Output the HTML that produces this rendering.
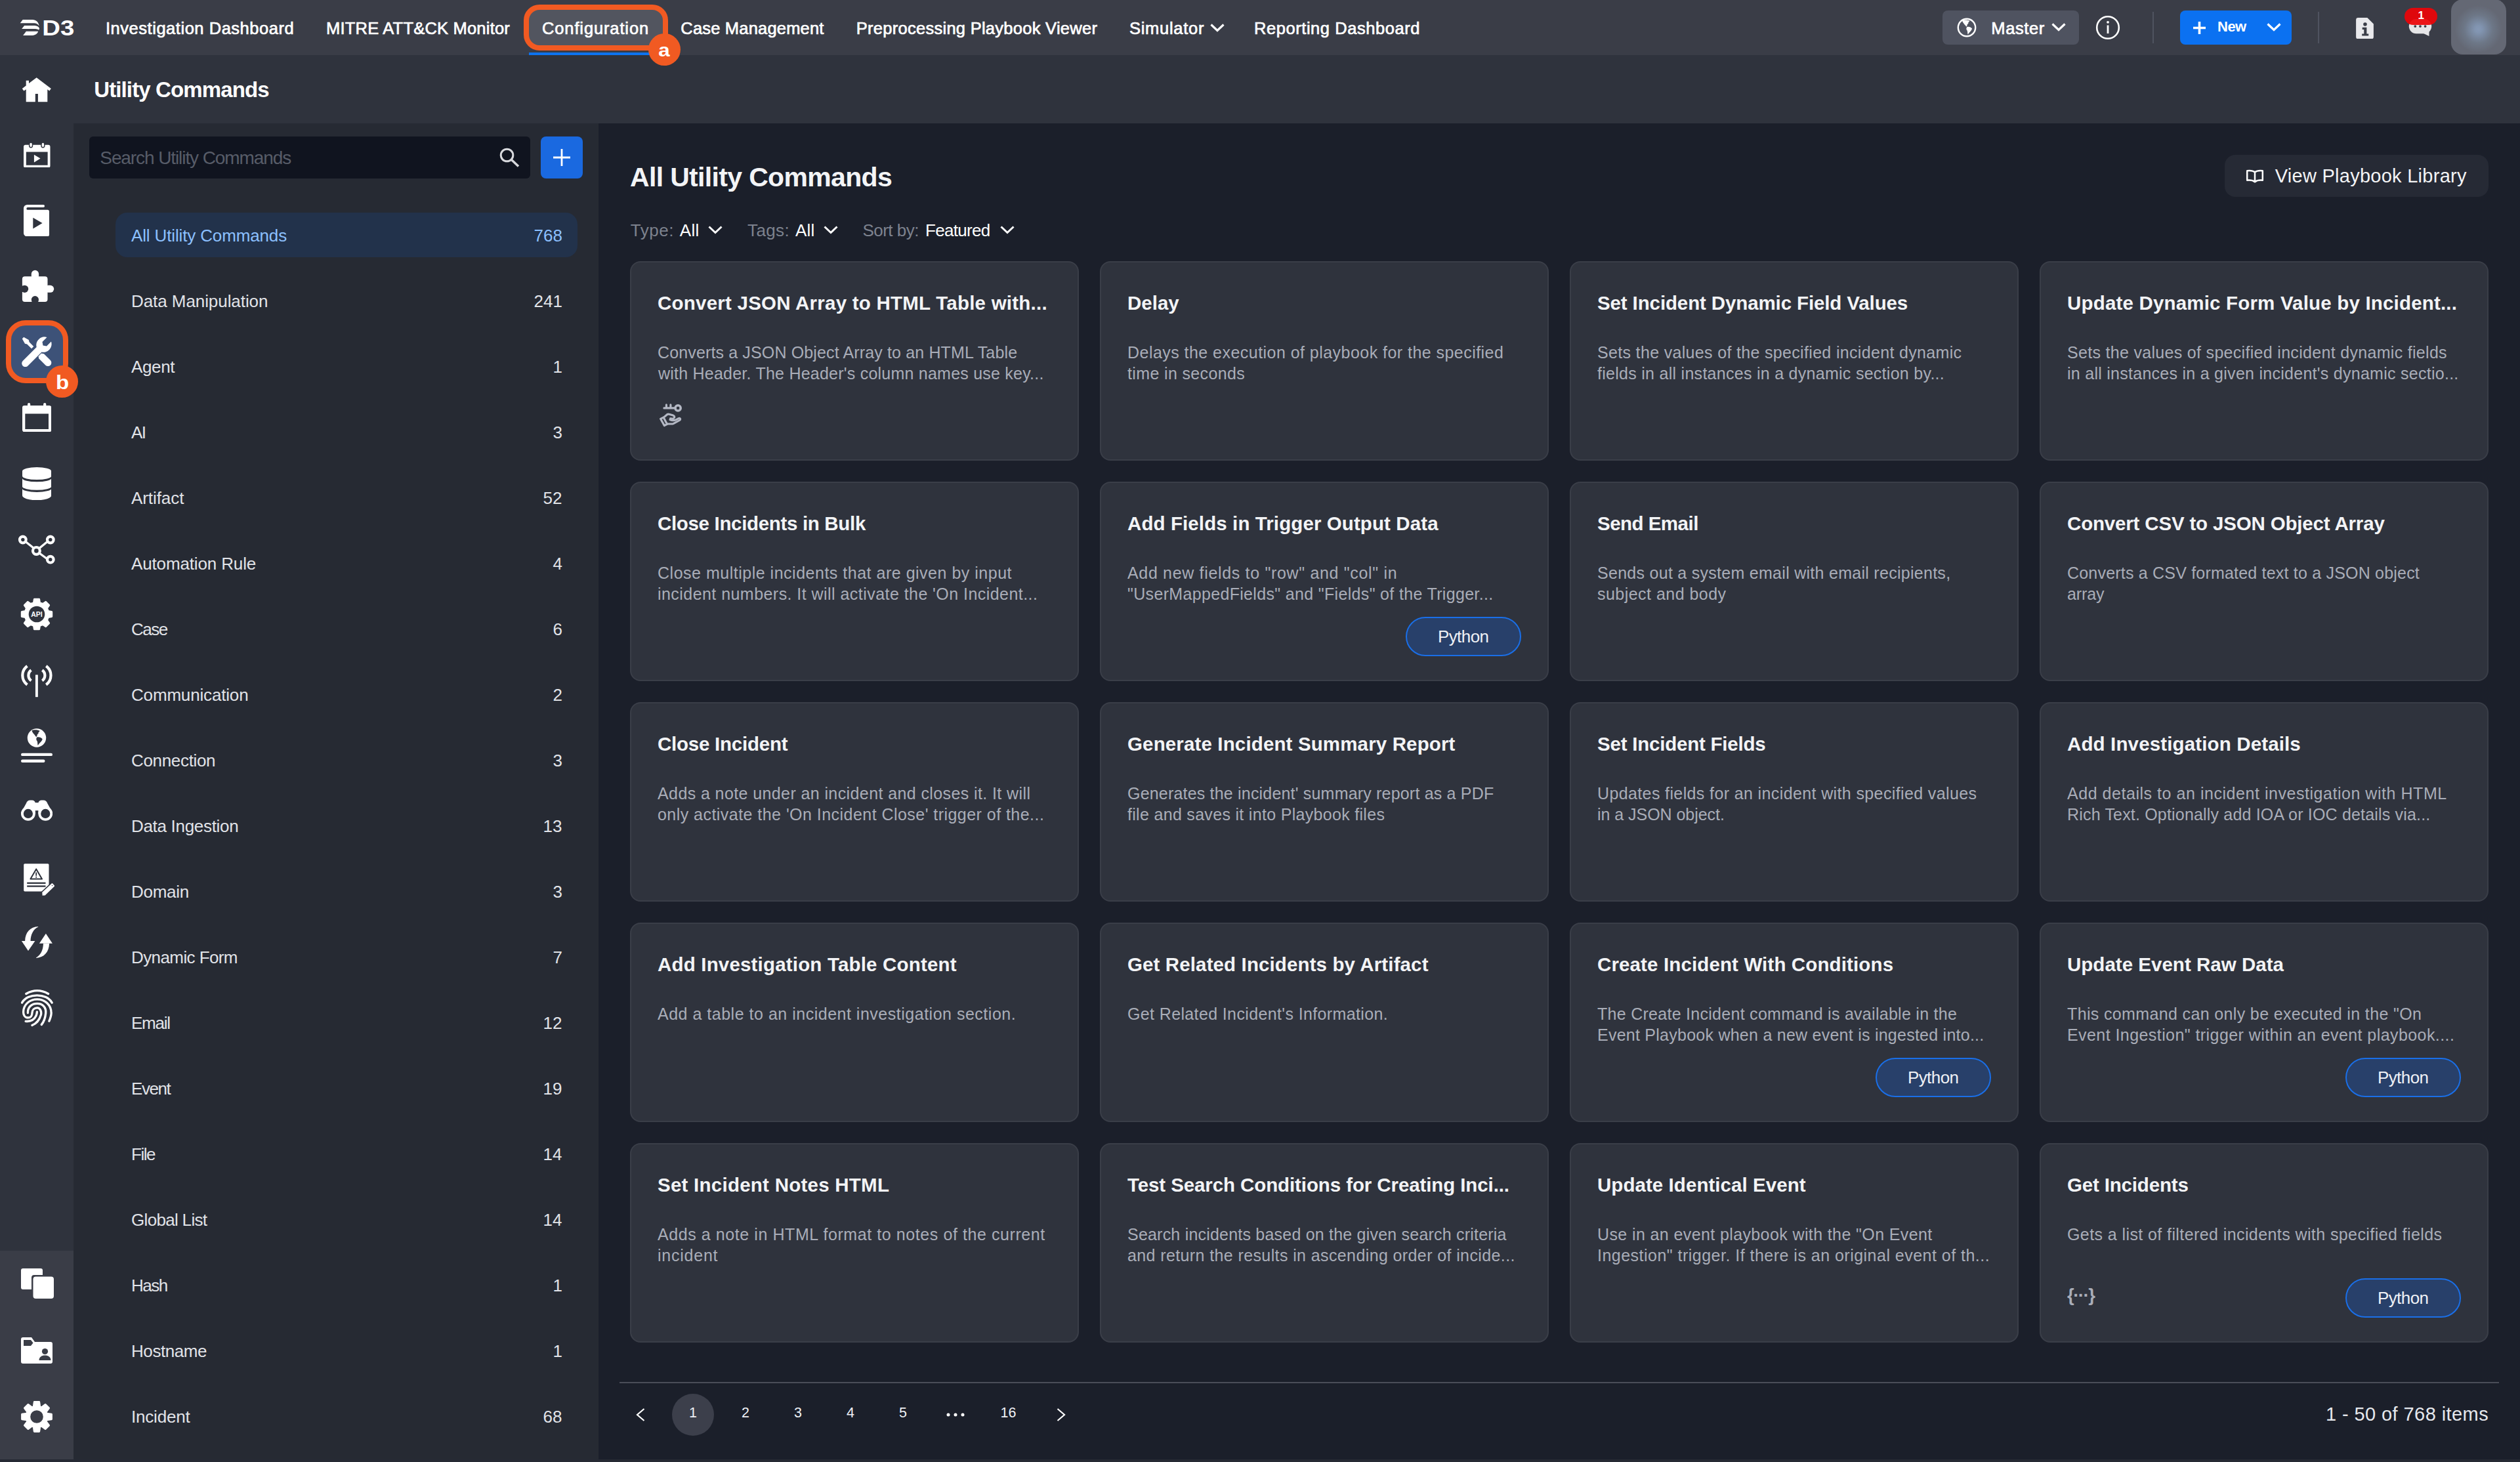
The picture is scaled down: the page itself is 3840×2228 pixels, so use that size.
<!DOCTYPE html>
<html lang="en"><head><meta charset="utf-8"><title>Utility Commands</title>
<style>
*{box-sizing:border-box;margin:0;padding:0}
html,body{width:3840px;height:2228px;overflow:hidden;background:#1b1f2a}
body{position:relative;font-family:"Liberation Sans",Arial,sans-serif;color:#fff}
body div,body span,body a,body svg,body nav,body header,body aside,body main,body section,body h1,body h2,body h3,body p,body ul,body li,body button{position:absolute;white-space:nowrap}
h1,h2,h3{font-weight:700}
ul{list-style:none}
a{text-decoration:none;color:inherit}
.topbar{left:0;top:0;width:3840px;height:84px;background:#3a3d47}
.sub{left:0;top:84px;width:3840px;height:104px;background:#2f333d}
.rail{left:0;top:84px;width:112px;height:2140px;background:#2f333d;z-index:3}
.railbot{left:0;top:1822px;width:112px;height:318px;background:#3a3d47}
.panel{left:112px;top:188px;width:800px;height:2036px;background:#262a33}
.main{left:912px;top:188px;width:2928px;height:2036px;background:#1b1f2a}
.foot{left:0;top:2224px;width:3840px;height:4px;background:#262a34}
.nav a{-webkit-text-stroke:0.7px #fff}
.card{width:684px;height:304px;background:#2f333d;border:2px solid #3a3e48;border-radius:16px}
.badge{width:176px;height:60px;border:2px solid #1a6fe8;border-radius:30px;background:#28406a}
.sel{left:64px;top:136px;width:704px;height:68px;border-radius:18px;background:#22324b}
</style></head>
<body>
<header class="topbar">
<svg style="left:24px;top:20px" width="100" height="44" viewBox="0 0 100 44">
<g fill="#fff"><path d="M10.700 10.100H25.400C31 10.300 34.500 13.500 35.700 19.400 33.500 16.700 31 15.400 28 15.300H6.700z"/><path d="M13.100 19H29C32.500 19.300 35 20.800 36.100 23.300L35.200 25.700C33.800 24.600 32 24.100 30 24H9.100z"/><path d="M15.900 27.800H34.200C33 31.500 30 33.700 25.400 33.900H11.100z"/></g>
<text x="40.300" y="33.900" font-family="Liberation Sans,sans-serif" font-weight="700" font-size="33.200" fill="#fff" textLength="49" lengthAdjust="spacingAndGlyphs">D3</text></svg>
<nav class="nav">
<div style="left:798px;top:7px;width:220px;height:70px;border:8px solid #f15a22;border-radius:24px;background:#52555f"></div>
<div style="left:806px;top:80px;width:204px;height:4px;background:#0d73f0"></div>
<a style="top:26.5px;font-size:25.5px;line-height:33px;color:#fff;letter-spacing:0.53px;left:161.0px;">Investigation Dashboard</a>
<a style="top:26.5px;font-size:25.5px;line-height:33px;color:#fff;letter-spacing:0.21px;left:497.0px;">MITRE ATT&amp;CK Monitor</a>
<a style="top:26.5px;font-size:25.5px;line-height:33px;color:#fff;letter-spacing:0.87px;left:826.0px;">Configuration</a>
<a style="top:26.5px;font-size:25.5px;line-height:33px;color:#fff;letter-spacing:0.19px;left:1037.3px;">Case Management</a>
<a style="top:26.5px;font-size:25.5px;line-height:33px;color:#fff;letter-spacing:0.27px;left:1304.8px;">Preprocessing Playbook Viewer</a>
<a style="top:26.5px;font-size:25.5px;line-height:33px;color:#fff;letter-spacing:0.71px;left:1721.0px;">Simulator</a>
<a style="top:26.5px;font-size:25.5px;line-height:33px;color:#fff;letter-spacing:0.56px;left:1911.0px;">Reporting Dashboard</a>
<svg style="left:1843px;top:34px" width="24" height="16" viewBox="0 0 24 16"><path d="M2.500 3.500 12 12.500 21.500 3.500" fill="none" stroke="#fff" stroke-width="3.200"/></svg>
</nav>
<div style="left:988px;top:51px;width:49px;height:49px;border-radius:50%;background:#f15a22;z-index:5"></div>
<div style="top:58.4px;font-size:28.5px;line-height:37px;color:#fff;font-weight:700;left:1004.0px;z-index:6;transform:scaleX(1.1);">a</div>
<div style="left:2960px;top:16px;width:208px;height:52px;border-radius:8px;background:#4f5360"></div>
<svg style="left:2982.400px;top:26.900px" width="30" height="30" viewBox="0 0 30 30"><circle cx="15" cy="15" r="13.200" fill="none" stroke="#fff" stroke-width="2.400"/>
<g fill="#fff" transform="translate(15 15) scale(0.93) translate(-25 -14.500)"><path d="M17.500 3.200C20 1.800 27 1.800 29.800 3.900 28 5 27 6.500 27.500 8 26 8.500 25.300 10 25.500 11.500 25 12.500 24.300 13 24 12.900 22.500 10 19 8 17.500 3.200z"/><path d="M25.300 13.600C28 12.500 32 14 33.700 16.200 33 19 31 21 29.800 22 28.500 23.500 27.500 25 26.600 25.900 26 22 26.500 20 24.600 18.100 24 16 24.500 14.500 25.300 13.600z"/></g></svg>
<div style="top:26.5px;font-size:25.5px;line-height:33px;color:#fff;letter-spacing:0.60px;left:3034.3px;-webkit-text-stroke:0.7px #fff;">Master</div>
<svg style="left:3125px;top:33px" width="24" height="16" viewBox="0 0 24 16"><path d="M2.500 3.500 12 12.500 21.500 3.500" fill="none" stroke="#fff" stroke-width="3.200"/></svg>
<svg style="left:3193px;top:23px" width="38" height="38" viewBox="0 0 38 38"><circle cx="19" cy="19" r="16.800" fill="none" stroke="#fff" stroke-width="2.600"/><rect x="17.600" y="15.500" width="2.800" height="12.500" fill="#fff"/><circle cx="19" cy="10.800" r="1.900" fill="#fff"/></svg>
<div style="left:3280px;top:18px;width:2px;height:48px;background:#4f5360"></div>
<button style="left:3322px;top:16px;width:170px;height:52px;border:0;border-radius:8px;background:#0b71f1"></button>
<svg style="left:3341px;top:32px" width="21" height="21" viewBox="0 0 21 21"><path d="M10.500 1v19M1 10.500h19" stroke="#fff" stroke-width="3.600" fill="none"/></svg>
<div style="top:25.5px;font-size:22px;line-height:29px;color:#fff;font-weight:700;letter-spacing:-0.50px;left:3379.0px;">New</div>
<svg style="left:3453px;top:33px" width="24" height="16" viewBox="0 0 24 16"><path d="M2.500 3.500 12 12.500 21.500 3.500" fill="none" stroke="#fff" stroke-width="3.200"/></svg>
<div style="left:3532px;top:18px;width:2px;height:48px;background:#4f5360"></div>
<svg style="left:3589.500px;top:26.700px" width="27" height="32.500" viewBox="0 0 28 34"><path d="M3.500 0H18l10 10v20.500a3.500 3.500 0 0 1-3.500 3.500h-21A3.500 3.500 0 0 1 0 30.500v-27A3.500 3.500 0 0 1 3.500 0z" fill="#e9e9ec"/>
<circle cx="14.500" cy="10.500" r="2.900" fill="#3a3d47"/><path d="M10 15.500h7v10h3v3.200H9.500v-3.200h3.200v-6.800H10z" fill="#3a3d47"/></svg>
<svg style="left:3670px;top:28px" width="37" height="29" viewBox="0 0 37 29"><rect x="0.800" y="1" width="34.400" height="22.200" rx="11" fill="#e6e6e8"/><path d="M22 22.500 31.400 27 31.600 18z" fill="#e6e6e8"/>
<circle cx="10.300" cy="12.100" r="1.900" fill="#3a3d47"/><circle cx="18" cy="12.100" r="1.900" fill="#3a3d47"/><circle cx="25.600" cy="12.100" r="1.900" fill="#3a3d47"/></svg>
<div style="left:3664px;top:12px;width:50px;height:26px;border-radius:13px;background:rgba(236,4,8,0.93)"></div>
<div style="top:13.1px;font-size:17px;line-height:22px;color:#fff;font-weight:700;left:3684.5px;">1</div>
<div style="left:3735px;top:-1px;width:84px;height:84px;border-radius:18px;background:radial-gradient(circle 36px at 49.500% 54%,#8598b5 0%,#8194b0 15%,#6d7787 60%,#646874 100%)"></div>
</header>
<section class="sub">
<h1 style="top:31.3px;font-size:33px;line-height:43px;color:#fff;font-weight:700;letter-spacing:-0.87px;left:143.2px;">Utility Commands</h1>
</section>
<aside class="rail">
<div class="railbot"></div>
<div style="left:9px;top:404px;width:95px;height:96px;border:8px solid #f15a22;border-radius:30px;background:#3d5278"></div>
<svg style="left:33.0px;top:33.5px;" width="46" height="38" viewBox="0 0 46 38"><path fill="#fff" d="M22.700 0.300 44.800 17 42.300 20.500 39.300 18.200V37.300H24.900V25H20.800V37.300H6.700V18.200L3.300 20.500 0.800 17 6.700 12.400V4.700H11V9.100z"/></svg>
<svg style="left:36.0px;top:132.9px;" width="40.5" height="38.6" viewBox="0 0 42 40"><path fill="#fff" fill-rule="evenodd" d="M3 4h36a3 3 0 0 1 3 3v30a3 3 0 0 1-3 3H3a3 3 0 0 1-3-3V7a3 3 0 0 1 3-3zM4 15v21h34V15zM16.500 19.500v12l10-6z"/><rect x="9" y="0" width="5" height="8" rx="2.500" fill="#fff" stroke="#2f333d" stroke-width="1.500"/><rect x="28" y="0" width="5" height="8" rx="2.500" fill="#fff" stroke="#2f333d" stroke-width="1.500"/></svg>
<svg style="left:35.7px;top:227.8px;" width="39" height="48.3" viewBox="0 0 39 48.300"><path fill="#fff" fill-rule="evenodd" d="M5.500 0H30a2.050 2.050 0 0 1 0 4.100H6.200a1.850 1.850 0 0 0 0 3.700H36.500a2.500 2.500 0 0 1 2.500 2.500V45.800a2.500 2.500 0 0 1-2.500 2.500H5a5 5 0 0 1-5-5V5.500A5.500 5.500 0 0 1 5.500 0zM14.300 19.800V36.400L28.600 28.100z"/></svg>
<svg style="left:33.0px;top:327.0px;" width="50" height="50" viewBox="0 0 50 50"><g fill="#fff"><rect x="0.900" y="10.200" width="38.600" height="38.900" rx="4"/><rect x="14.800" y="0.800" width="11.300" height="14" rx="5.650"/><rect x="35" y="23.800" width="14.200" height="11" rx="5.500"/></g><g fill="#2f333d"><circle cx="4.600" cy="29.300" r="5.600"/><rect x="0" y="24.600" width="4.600" height="9.400"/><circle cx="20.400" cy="45.700" r="5.600"/><rect x="15.700" y="45.700" width="9.400" height="4.300"/></g></svg>
<svg style="left:33.0px;top:429.0px;" width="46" height="46" viewBox="0 0 46 46"><g fill="#fff"><path d="M0.800 3.200 3.200 0.800 10.800 5 11.600 8.200 18.300 14.900 15 18.200 8.200 11.600 5 10.800z"/><path d="M25.500 30 30 25.500 34 26.200 43.800 36a5 5 0 0 1-7.500 7.500L26.300 33.500z"/><path d="M38.500 1 31.500 8l1 5.500 5.500 1 7-7A12.500 12.500 0 0 1 30.500 23.500L9.500 44.500a5.300 5.300 0 0 1-7.800-7.500L22.700 16A12.500 12.500 0 0 1 38.500 1z"/></g></svg>
<svg style="left:33.9px;top:529.7px;" width="44.3" height="44.3" viewBox="0 0 44.300 44.300"><path fill="#fff" fill-rule="evenodd" d="M3.200 4h37.900a3.200 3.200 0 0 1 3.200 3.200v33.900a3.200 3.200 0 0 1-3.200 3.200H3.200A3.200 3.200 0 0 1 0 41.100V7.200A3.200 3.200 0 0 1 3.200 4zM4.300 16.600V40H40V16.600z"/><rect x="8" y="0" width="4.200" height="8" rx="2.100" fill="#fff"/><rect x="32.100" y="0" width="4.200" height="8" rx="2.100" fill="#fff"/></svg>
<svg style="left:33.9px;top:627.9px;" width="44.2" height="50.3" viewBox="0 0 44.200 50.300"><g fill="#fff"><path d="M0 6.100A22.100 6.100 0 0 1 44.200 6.100V13.500A22.100 5.600 0 0 1 0 13.500z"/><path d="M0 17.100A22.100 5.200 0 0 0 44.200 17.100V29.500A22.100 5.200 0 0 1 0 29.500z"/><path d="M0 32.700A22.100 5.200 0 0 0 44.200 32.700V43.100A22.100 7.200 0 0 1 0 43.100z"/></g></svg>
<svg style="left:27.0px;top:731.0px;" width="58" height="46" viewBox="0 0 58 46"><g fill="none" stroke="#fff"><path stroke-width="3.400" d="M12 10.500 24 20M33.500 20 44.500 11M33 28l11.500 8.500"/><g stroke-width="4.200"><circle cx="7.800" cy="7.500" r="4.800"/><circle cx="49.800" cy="7.500" r="4.800"/><circle cx="28.400" cy="24.400" r="5.400"/><circle cx="49.800" cy="37.700" r="4.800"/></g></g></svg>
<svg style="left:31.0px;top:826.5px;" width="50" height="50" viewBox="0 0 50 50"><path fill="#fff" stroke="#fff" stroke-width="3" stroke-linejoin="round" d="M20.5 7.6 L21.4 2.3 L28.6 2.3 L29.5 7.6 L34.2 9.5 L38.6 6.4 L43.6 11.4 L40.5 15.8 L42.4 20.5 L47.7 21.4 L47.7 28.6 L42.4 29.5 L40.5 34.2 L43.6 38.6 L38.6 43.6 L34.2 40.5 L29.5 42.4 L28.6 47.7 L21.4 47.7 L20.5 42.4 L15.8 40.5 L11.4 43.6 L6.4 38.6 L9.5 34.2 L7.6 29.5 L2.3 28.6 L2.3 21.4 L7.6 20.5 L9.5 15.8 L6.4 11.4 L11.4 6.4 L15.8 9.5Z"/><circle cx="25" cy="25" r="12.300" fill="#2f333d"/><text x="25" y="28.900" text-anchor="middle" font-family="Liberation Sans,sans-serif" font-weight="700" font-size="10.500" fill="#fff">API</text></svg>
<svg style="left:31.0px;top:928.5px;" width="50" height="50" viewBox="0 0 50 50"><g fill="none" stroke="#fff" stroke-width="4.200"><path d="M10.500 2A17.700 17.700 0 0 0 10.500 30.500M39.300 2A17.700 17.700 0 0 1 39.300 30.500M16.500 8.300A9.950 9.950 0 0 0 16.500 24.400M33.300 8.300A9.950 9.950 0 0 1 33.300 24.400"/><path stroke-width="3.900" d="M24.900 15.400V49.200"/></g></svg>
<svg style="left:31.0px;top:1026.0px;" width="50" height="52" viewBox="0 0 50 52"><circle cx="25" cy="14.500" r="14.200" fill="#fff"/><g fill="#2f333d"><path d="M17.500 3.200C20 1.800 27 1.800 29.800 3.900 28 5 27 6.500 27.500 8 26 8.500 25.300 10 25.500 11.500 25 12.500 24.300 13 24 12.900 22.500 10 19 8 17.500 3.200z"/><path d="M25.300 13.600C28 12.500 32 14 33.700 16.200 33 19 31 21 29.800 22 28.500 23.500 27.500 25 26.600 25.900 26 22 26.500 20 24.600 18.100 24 16 24.500 14.500 25.300 13.600z"/></g><rect x="1" y="37.700" width="48" height="4.400" rx="2.200" fill="#fff"/><rect x="1" y="47.600" width="36.500" height="4.400" rx="2.200" fill="#fff"/></svg>
<svg style="left:31.8px;top:1135.1px;" width="48.2" height="32" viewBox="0 0 48.200 32"><g fill="#fff"><path d="M0.300 19 7.800 5.500Q9.500 0.600 14 0.600H17Q20.500 0.600 21.800 4.200V21H0.300z"/><path d="M47.900 19 40.400 5.500Q38.700 0.600 34.200 0.600H31.200Q27.700 0.600 26.400 4.200V21H47.900z"/><rect x="21" y="4.200" width="6.200" height="12"/><circle cx="10.900" cy="20.900" r="10.900"/><circle cx="37.300" cy="20.900" r="10.900"/></g><circle cx="10.900" cy="20.900" r="7.100" fill="#2f333d"/><circle cx="37.300" cy="20.900" r="7.100" fill="#2f333d"/></svg>
<svg style="left:35.5px;top:1231.5px;" width="47" height="50" viewBox="0 0 47 50"><rect x="0.200" y="0.200" width="38.300" height="42.200" rx="1.600" fill="#fff"/><path d="M19.200 8.400 28 23.600H10.400z" fill="none" stroke="#2f333d" stroke-width="2" stroke-linejoin="round"/><rect x="18.300" y="13.500" width="1.800" height="5.200" fill="#2f333d"/><rect x="18.300" y="19.800" width="1.800" height="1.800" fill="#2f333d"/><rect x="5.200" y="28.600" width="28.300" height="2.300" fill="#2f333d"/><rect x="5.200" y="33.400" width="28.300" height="2.300" fill="#2f333d"/><path d="M28.600 48.800 28.300 43.800 42.600 30.400Q43.500 29.800 44.200 30.500L46.800 33.300Q47.300 34.200 46.600 34.900L32.600 48.600z" fill="#fff" stroke="#2f333d" stroke-width="3.200" paint-order="stroke"/><circle cx="43.600" cy="33.500" r="0.800" fill="#2f333d"/></svg>
<svg style="left:32.0px;top:1327.0px;" width="49" height="50" viewBox="0 0 49 50"><g fill="#fff"><path d="M0.900 22.900H21.400L11 38.100z"/><path d="M26.200 1.100C14 1.500 6.500 10 6.100 22.900H14.500C14.800 13 19 5 26.200 1.600z"/><path d="M27.900 26.800H47.900L37.900 11.700z"/><path d="M23 48.900C35 48.500 42.700 40 43.100 26.800H34C33.700 37 30 44.500 23 48.400z"/></g></svg>
<svg style="left:31.6px;top:1423.5px;" width="49" height="57" viewBox="0 0 49 57"><g fill="none" stroke="#fff" stroke-width="3.300" stroke-linecap="round"><path d="M7.800 6.500Q24.700-3.100 41.600 6.500"/><path d="M1.500 20.100C10 5 39 5 47.200 20.100"/><path d="M42.900 48.100C45 43 46.300 39 46.100 35.700 46 23 36 14.900 24.700 14.900 13 14.900 3.600 23 3.600 34.400 3.600 38 5.500 42.900 11 42.900 14.500 42.900 16.900 40 16.900 36 17 31 20 27.900 24.700 27.900 29 27.900 31.500 33 30.500 38.300 28 47 22 52.500 16.900 54.500"/><path d="M10.400 35.700C10 27 16 21.400 24.700 21.400 33 21.400 38.500 27 37.700 36 37 43 35 49 31.200 53.600"/><path d="M7.100 48.400C14 49 20 46 23 40 24 37.500 24.400 35.500 24.400 33.800"/></g></svg>
<svg style="left:32.0px;top:1849.0px;" width="50" height="46" viewBox="0 0 50 46"><path fill="#fff" d="M3 0h27a3 3 0 0 1 3 3v7H20a4 4 0 0 0-4 4v18H3a3 3 0 0 1-3-3V3a3 3 0 0 1 3-3z"/><rect x="18.500" y="12.500" width="31.500" height="33.500" rx="4" fill="#fff"/></svg>
<svg style="left:32.0px;top:1954.0px;" width="48" height="40" viewBox="0 0 48 40"><path fill="#fff" d="M3 0h13l5 7h24a3 3 0 0 1 3 3v27a3 3 0 0 1-3 3H3a3 3 0 0 1-3-3V3a3 3 0 0 1 3-3z"/><path fill="#3a3d47" d="M4 4h11l3.500 4.500L15 13H4z"/><circle cx="36.500" cy="21.500" r="4.600" fill="#3a3d47"/><path fill="#3a3d47" d="M27.500 35c0-5 4-7.500 9-7.500s9 2.500 9 7.500z"/></svg>
<svg style="left:31.0px;top:2049.5px;" width="50" height="50" viewBox="0 0 50 50"><path fill="#fff" stroke="#fff" stroke-width="3" stroke-linejoin="round" d="M20.3 9.7 L21.3 2.6 L28.7 2.6 L29.7 9.7 L32.5 10.8 L38.2 6.5 L43.5 11.8 L39.2 17.5 L40.3 20.3 L47.4 21.3 L47.4 28.7 L40.3 29.7 L39.2 32.5 L43.5 38.2 L38.2 43.5 L32.5 39.2 L29.7 40.3 L28.7 47.4 L21.3 47.4 L20.3 40.3 L17.5 39.2 L11.8 43.5 L6.5 38.2 L10.8 32.5 L9.7 29.7 L2.6 28.7 L2.6 21.3 L9.7 20.3 L10.8 17.5 L6.5 11.8 L11.8 6.5 L17.5 10.8Z"/><circle cx="25" cy="25" r="9.800" fill="#3a3d47"/></svg>
<div style="left:70px;top:473px;width:49px;height:49px;border-radius:50%;background:#f15a22"></div>
<div style="top:478.7px;font-size:30px;line-height:39px;color:#fff;font-weight:700;left:85.5px;transform:scaleX(1.1);">b</div>
</aside>
<aside class="panel">
<div style="left:24px;top:20px;width:672px;height:64px;border-radius:6px;background:#10141f"></div>
<div style="top:34.8px;font-size:28px;line-height:36px;color:#575c68;letter-spacing:-1.09px;left:40.3px;">Search Utility Commands</div>
<svg style="left:649px;top:37px" width="31" height="30" viewBox="0 0 31 30"><circle cx="11.500" cy="11.500" r="9.300" fill="none" stroke="#d8d9dd" stroke-width="3"/><path d="M18.500 18.500 29 28.500" stroke="#d8d9dd" stroke-width="3.400" fill="none"/></svg>
<button style="left:712px;top:20px;width:64px;height:64px;border:0;border-radius:8px;background:#1a69e0"></button>
<svg style="left:730px;top:38px" width="28" height="28" viewBox="0 0 28 28"><path d="M14 1v26M1 14h26" stroke="#fff" stroke-width="2.800" fill="none"/></svg>
<div class="sel"></div>
<ul>
<li><span style="top:154.0px;font-size:26px;line-height:34px;color:#8cc0ff;letter-spacing:-0.14px;left:88.0px;">All Utility Commands</span><span style="top:154.0px;font-size:26px;line-height:34px;color:#8cc0ff;left:701.5px;">768</span></li>
<li><span style="top:254.0px;font-size:26px;line-height:34px;color:#e1e3e8;letter-spacing:-0.07px;left:88.0px;">Data Manipulation</span><span style="top:254.0px;font-size:26px;line-height:34px;color:#e1e3e8;left:701.5px;">241</span></li>
<li><span style="top:354.0px;font-size:26px;line-height:34px;color:#e1e3e8;letter-spacing:-0.35px;left:88.0px;">Agent</span><span style="top:354.0px;font-size:26px;line-height:34px;color:#e1e3e8;left:730.5px;">1</span></li>
<li><span style="top:454.0px;font-size:26px;line-height:34px;color:#e1e3e8;letter-spacing:-1.50px;left:88.0px;">AI</span><span style="top:454.0px;font-size:26px;line-height:34px;color:#e1e3e8;left:730.5px;">3</span></li>
<li><span style="top:554.0px;font-size:26px;line-height:34px;color:#e1e3e8;letter-spacing:-0.07px;left:88.0px;">Artifact</span><span style="top:554.0px;font-size:26px;line-height:34px;color:#e1e3e8;left:715.5px;">52</span></li>
<li><span style="top:654.0px;font-size:26px;line-height:34px;color:#e1e3e8;letter-spacing:-0.14px;left:88.0px;">Automation Rule</span><span style="top:654.0px;font-size:26px;line-height:34px;color:#e1e3e8;left:730.5px;">4</span></li>
<li><span style="top:754.0px;font-size:26px;line-height:34px;color:#e1e3e8;letter-spacing:-1.50px;left:88.0px;">Case</span><span style="top:754.0px;font-size:26px;line-height:34px;color:#e1e3e8;left:730.5px;">6</span></li>
<li><span style="top:854.0px;font-size:26px;line-height:34px;color:#e1e3e8;letter-spacing:-0.17px;left:88.0px;">Communication</span><span style="top:854.0px;font-size:26px;line-height:34px;color:#e1e3e8;left:730.5px;">2</span></li>
<li><span style="top:954.0px;font-size:26px;line-height:34px;color:#e1e3e8;letter-spacing:-0.33px;left:88.0px;">Connection</span><span style="top:954.0px;font-size:26px;line-height:34px;color:#e1e3e8;left:730.5px;">3</span></li>
<li><span style="top:1054.0px;font-size:26px;line-height:34px;color:#e1e3e8;letter-spacing:-0.31px;left:88.0px;">Data Ingestion</span><span style="top:1054.0px;font-size:26px;line-height:34px;color:#e1e3e8;left:715.5px;">13</span></li>
<li><span style="top:1154.0px;font-size:26px;line-height:34px;color:#e1e3e8;letter-spacing:-0.26px;left:88.0px;">Domain</span><span style="top:1154.0px;font-size:26px;line-height:34px;color:#e1e3e8;left:730.5px;">3</span></li>
<li><span style="top:1254.0px;font-size:26px;line-height:34px;color:#e1e3e8;letter-spacing:-0.59px;left:88.0px;">Dynamic Form</span><span style="top:1254.0px;font-size:26px;line-height:34px;color:#e1e3e8;left:730.5px;">7</span></li>
<li><span style="top:1354.0px;font-size:26px;line-height:34px;color:#e1e3e8;letter-spacing:-1.25px;left:88.0px;">Email</span><span style="top:1354.0px;font-size:26px;line-height:34px;color:#e1e3e8;left:715.5px;">12</span></li>
<li><span style="top:1454.0px;font-size:26px;line-height:34px;color:#e1e3e8;letter-spacing:-1.45px;left:88.0px;">Event</span><span style="top:1454.0px;font-size:26px;line-height:34px;color:#e1e3e8;left:715.5px;">19</span></li>
<li><span style="top:1554.0px;font-size:26px;line-height:34px;color:#e1e3e8;letter-spacing:-1.50px;left:88.0px;">File</span><span style="top:1554.0px;font-size:26px;line-height:34px;color:#e1e3e8;left:715.5px;">14</span></li>
<li><span style="top:1654.0px;font-size:26px;line-height:34px;color:#e1e3e8;letter-spacing:-0.68px;left:88.0px;">Global List</span><span style="top:1654.0px;font-size:26px;line-height:34px;color:#e1e3e8;left:715.5px;">14</span></li>
<li><span style="top:1754.0px;font-size:26px;line-height:34px;color:#e1e3e8;letter-spacing:-1.50px;left:88.0px;">Hash</span><span style="top:1754.0px;font-size:26px;line-height:34px;color:#e1e3e8;left:730.5px;">1</span></li>
<li><span style="top:1854.0px;font-size:26px;line-height:34px;color:#e1e3e8;letter-spacing:-0.43px;left:88.0px;">Hostname</span><span style="top:1854.0px;font-size:26px;line-height:34px;color:#e1e3e8;left:730.5px;">1</span></li>
<li><span style="top:1954.0px;font-size:26px;line-height:34px;color:#e1e3e8;letter-spacing:-0.20px;left:88.0px;">Incident</span><span style="top:1954.0px;font-size:26px;line-height:34px;color:#e1e3e8;left:715.5px;">68</span></li>
</ul>
</aside>
<main class="main">
<h2 style="top:55.7px;font-size:41px;line-height:53px;color:#f3f4f6;font-weight:700;letter-spacing:-0.66px;left:48.0px;">All Utility Commands</h2>
<div style="top:146.0px;font-size:26px;line-height:34px;color:#7d828e;letter-spacing:0.50px;left:48.8px;">Type:</div>
<div style="top:146.0px;font-size:26px;line-height:34px;color:#fff;letter-spacing:0.25px;left:123.8px;">All</div>
<svg style="left:166px;top:154px" width="24" height="16" viewBox="0 0 24 16"><path d="M2.500 3.500 12 12.500 21.500 3.500" fill="none" stroke="#fff" stroke-width="3"/></svg>
<div style="top:146.0px;font-size:26px;line-height:34px;color:#7d828e;letter-spacing:0.38px;left:227.0px;">Tags:</div>
<div style="top:146.0px;font-size:26px;line-height:34px;color:#fff;letter-spacing:0.25px;left:300.0px;">All</div>
<svg style="left:342px;top:154px" width="24" height="16" viewBox="0 0 24 16"><path d="M2.500 3.500 12 12.500 21.500 3.500" fill="none" stroke="#fff" stroke-width="3"/></svg>
<div style="top:146.0px;font-size:26px;line-height:34px;color:#7d828e;letter-spacing:-0.50px;left:402.4px;">Sort by:</div>
<div style="top:146.0px;font-size:26px;line-height:34px;color:#fff;letter-spacing:-0.71px;left:498.0px;">Featured</div>
<svg style="left:611px;top:154px" width="24" height="16" viewBox="0 0 24 16"><path d="M2.500 3.500 12 12.500 21.500 3.500" fill="none" stroke="#fff" stroke-width="3"/></svg>
<button style="left:2478px;top:48px;width:402px;height:64px;border:0;border-radius:16px;background:#262a35"></button>
<svg style="left:2510px;top:69.5px" width="28" height="21" viewBox="0 0 28 21"><path d="M14 4.300C11.300 2.200 6.500 1.700 2.200 2.200v14.600c4.500-.5 9 .2 11.800 2.400 2.800-2.200 7.300-2.900 11.800-2.400V2.200c-4.300-.5-9.100 0-11.800 2.100zM14 4.300v14.900" fill="none" stroke="#fff" stroke-width="2.500" stroke-linejoin="round"/></svg>
<div style="top:61.0px;font-size:29px;line-height:38px;color:#f3f4f6;letter-spacing:0.27px;left:2554.7px;">View Playbook Library</div>
<section class="card" style="left:48px;top:210px">
<h3 style="top:42.8px;font-size:29.5px;line-height:38px;color:#f3f4f6;font-weight:700;letter-spacing:0.23px;left:40.0px;">Convert JSON Array to HTML Table with...</h3>
<p>
<span style="top:121.3px;font-size:25px;line-height:32px;color:#a9adb8;letter-spacing:0.14px;left:40.0px;">Converts a JSON Object Array to an HTML Table</span>
<span style="top:153.3px;font-size:25px;line-height:32px;color:#a9adb8;letter-spacing:0.23px;left:41.0px;">with Header. The Header's column names use key...</span>
</p>
<svg style="left:41px;top:213px" width="40" height="40" viewBox="0 0 40 40"><g fill="none" stroke="#b4b8c4" stroke-width="3.100" stroke-linecap="round" stroke-linejoin="round"><circle cx="30.100" cy="8.900" r="4.150" stroke-width="3.500"/><path d="M26 8.900H8.900M12.400 8.900V3.900M18.900 8.900V3.900"/><path d="M3.600 25.300 8 23 13.600 33.400 9.300 35.600z"/><path d="M9 22.600 13.500 18.800Q14.800 17.800 16.500 18.200L22 19.800Q25.500 21 24.500 23.500 23.800 25.200 21 25L18.500 24.800"/><path d="M18 26.500Q22 28.500 26.500 27L31 24.600Q33.200 23.800 33.600 25.400 33.800 26.600 32.500 27.500L23.500 32.300Q22 33 20.500 33H14"/></g></svg>
</section>
<section class="card" style="left:764px;top:210px">
<h3 style="top:42.8px;font-size:29.5px;line-height:38px;color:#f3f4f6;font-weight:700;left:40.0px;">Delay</h3>
<p>
<span style="top:121.3px;font-size:25px;line-height:32px;color:#a9adb8;letter-spacing:0.46px;left:40.0px;">Delays the execution of playbook for the specified</span>
<span style="top:153.3px;font-size:25px;line-height:32px;color:#a9adb8;letter-spacing:0.36px;left:40.0px;">time in seconds</span>
</p>
</section>
<section class="card" style="left:1480px;top:210px">
<h3 style="top:42.8px;font-size:29.5px;line-height:38px;color:#f3f4f6;font-weight:700;letter-spacing:-0.12px;left:40.0px;">Set Incident Dynamic Field Values</h3>
<p>
<span style="top:121.3px;font-size:25px;line-height:32px;color:#a9adb8;letter-spacing:0.33px;left:40.0px;">Sets the values of the specified incident dynamic</span>
<span style="top:153.3px;font-size:25px;line-height:32px;color:#a9adb8;letter-spacing:0.28px;left:40.0px;">fields in all instances in a dynamic section by...</span>
</p>
</section>
<section class="card" style="left:2196px;top:210px">
<h3 style="top:42.8px;font-size:29.5px;line-height:38px;color:#f3f4f6;font-weight:700;letter-spacing:0.18px;left:40.0px;">Update Dynamic Form Value by Incident...</h3>
<p>
<span style="top:121.3px;font-size:25px;line-height:32px;color:#a9adb8;letter-spacing:0.31px;left:40.0px;">Sets the values of specified incident dynamic fields</span>
<span style="top:153.3px;font-size:25px;line-height:32px;color:#a9adb8;letter-spacing:0.27px;left:40.0px;">in all instances in a given incident's dynamic sectio...</span>
</p>
</section>
<section class="card" style="left:48px;top:546px">
<h3 style="top:42.8px;font-size:29.5px;line-height:38px;color:#f3f4f6;font-weight:700;letter-spacing:-0.33px;left:40.0px;">Close Incidents in Bulk</h3>
<p>
<span style="top:121.3px;font-size:25px;line-height:32px;color:#a9adb8;letter-spacing:0.51px;left:40.0px;">Close multiple incidents that are given by input</span>
<span style="top:153.3px;font-size:25px;line-height:32px;color:#a9adb8;letter-spacing:0.45px;left:40.0px;">incident numbers. It will activate the 'On Incident...</span>
</p>
</section>
<section class="card" style="left:764px;top:546px">
<h3 style="top:42.8px;font-size:29.5px;line-height:38px;color:#f3f4f6;font-weight:700;letter-spacing:0.10px;left:40.0px;">Add Fields in Trigger Output Data</h3>
<p>
<span style="top:121.3px;font-size:25px;line-height:32px;color:#a9adb8;letter-spacing:0.67px;left:40.0px;">Add new fields to "row" and "col" in</span>
<span style="top:153.3px;font-size:25px;line-height:32px;color:#a9adb8;letter-spacing:0.33px;left:40.0px;">"UserMappedFields" and "Fields" of the Trigger...</span>
</p>
<div class="badge" style="left:464px;top:204px"></div>
<div style="top:217.3px;font-size:26px;line-height:34px;color:#eef0f5;letter-spacing:-0.56px;left:512.9px;">Python</div>
</section>
<section class="card" style="left:1480px;top:546px">
<h3 style="top:42.8px;font-size:29.5px;line-height:38px;color:#f3f4f6;font-weight:700;letter-spacing:-0.52px;left:40.0px;">Send Email</h3>
<p>
<span style="top:121.3px;font-size:25px;line-height:32px;color:#a9adb8;letter-spacing:0.28px;left:40.0px;">Sends out a system email with email recipients,</span>
<span style="top:153.3px;font-size:25px;line-height:32px;color:#a9adb8;letter-spacing:0.47px;left:40.0px;">subject and body</span>
</p>
</section>
<section class="card" style="left:2196px;top:546px">
<h3 style="top:42.8px;font-size:29.5px;line-height:38px;color:#f3f4f6;font-weight:700;letter-spacing:-0.17px;left:40.0px;">Convert CSV to JSON Object Array</h3>
<p>
<span style="top:121.3px;font-size:25px;line-height:32px;color:#a9adb8;letter-spacing:0.20px;left:40.0px;">Converts a CSV formated text to a JSON object</span>
<span style="top:153.3px;font-size:25px;line-height:32px;color:#a9adb8;letter-spacing:-0.10px;left:40.0px;">array</span>
</p>
</section>
<section class="card" style="left:48px;top:882px">
<h3 style="top:42.8px;font-size:29.5px;line-height:38px;color:#f3f4f6;font-weight:700;letter-spacing:-0.24px;left:40.0px;">Close Incident</h3>
<p>
<span style="top:121.3px;font-size:25px;line-height:32px;color:#a9adb8;letter-spacing:0.40px;left:40.0px;">Adds a note under an incident and closes it. It will</span>
<span style="top:153.3px;font-size:25px;line-height:32px;color:#a9adb8;letter-spacing:0.46px;left:40.0px;">only activate the 'On Incident Close' trigger of the...</span>
</p>
</section>
<section class="card" style="left:764px;top:882px">
<h3 style="top:42.8px;font-size:29.5px;line-height:38px;color:#f3f4f6;font-weight:700;letter-spacing:0.14px;left:40.0px;">Generate Incident Summary Report</h3>
<p>
<span style="top:121.3px;font-size:25px;line-height:32px;color:#a9adb8;letter-spacing:0.19px;left:40.0px;">Generates the incident' summary report as a PDF</span>
<span style="top:153.3px;font-size:25px;line-height:32px;color:#a9adb8;letter-spacing:0.31px;left:40.0px;">file and saves it into Playbook files</span>
</p>
</section>
<section class="card" style="left:1480px;top:882px">
<h3 style="top:42.8px;font-size:29.5px;line-height:38px;color:#f3f4f6;font-weight:700;letter-spacing:-0.22px;left:40.0px;">Set Incident Fields</h3>
<p>
<span style="top:121.3px;font-size:25px;line-height:32px;color:#a9adb8;letter-spacing:0.38px;left:40.0px;">Updates fields for an incident with specified values</span>
<span style="top:153.3px;font-size:25px;line-height:32px;color:#a9adb8;letter-spacing:-0.04px;left:40.0px;">in a JSON object.</span>
</p>
</section>
<section class="card" style="left:2196px;top:882px">
<h3 style="top:42.8px;font-size:29.5px;line-height:38px;color:#f3f4f6;font-weight:700;letter-spacing:0.14px;left:40.0px;">Add Investigation Details</h3>
<p>
<span style="top:121.3px;font-size:25px;line-height:32px;color:#a9adb8;letter-spacing:0.54px;left:40.0px;">Add details to an incident investigation with HTML</span>
<span style="top:153.3px;font-size:25px;line-height:32px;color:#a9adb8;letter-spacing:0.18px;left:40.0px;">Rich Text. Optionally add IOA or IOC details via...</span>
</p>
</section>
<section class="card" style="left:48px;top:1218px">
<h3 style="top:42.8px;font-size:29.5px;line-height:38px;color:#f3f4f6;font-weight:700;letter-spacing:0.18px;left:40.0px;">Add Investigation Table Content</h3>
<p>
<span style="top:121.3px;font-size:25px;line-height:32px;color:#a9adb8;letter-spacing:0.51px;left:40.0px;">Add a table to an incident investigation section.</span>
</p>
</section>
<section class="card" style="left:764px;top:1218px">
<h3 style="top:42.8px;font-size:29.5px;line-height:38px;color:#f3f4f6;font-weight:700;letter-spacing:0.12px;left:40.0px;">Get Related Incidents by Artifact</h3>
<p>
<span style="top:121.3px;font-size:25px;line-height:32px;color:#a9adb8;letter-spacing:0.37px;left:40.0px;">Get Related Incident's Information.</span>
</p>
</section>
<section class="card" style="left:1480px;top:1218px">
<h3 style="top:42.8px;font-size:29.5px;line-height:38px;color:#f3f4f6;font-weight:700;letter-spacing:0.13px;left:40.0px;">Create Incident With Conditions</h3>
<p>
<span style="top:121.3px;font-size:25px;line-height:32px;color:#a9adb8;letter-spacing:0.28px;left:40.0px;">The Create Incident command is available in the</span>
<span style="top:153.3px;font-size:25px;line-height:32px;color:#a9adb8;letter-spacing:0.25px;left:40.0px;">Event Playbook when a new event is ingested into...</span>
</p>
<div class="badge" style="left:464px;top:204px"></div>
<div style="top:217.3px;font-size:26px;line-height:34px;color:#eef0f5;letter-spacing:-0.56px;left:512.9px;">Python</div>
</section>
<section class="card" style="left:2196px;top:1218px">
<h3 style="top:42.8px;font-size:29.5px;line-height:38px;color:#f3f4f6;font-weight:700;letter-spacing:0.02px;left:40.0px;">Update Event Raw Data</h3>
<p>
<span style="top:121.3px;font-size:25px;line-height:32px;color:#a9adb8;letter-spacing:0.36px;left:40.0px;">This command can only be executed in the "On</span>
<span style="top:153.3px;font-size:25px;line-height:32px;color:#a9adb8;letter-spacing:0.43px;left:40.0px;">Event Ingestion" trigger within an event playbook....</span>
</p>
<div class="badge" style="left:464px;top:204px"></div>
<div style="top:217.3px;font-size:26px;line-height:34px;color:#eef0f5;letter-spacing:-0.56px;left:512.9px;">Python</div>
</section>
<section class="card" style="left:48px;top:1554px">
<h3 style="top:42.8px;font-size:29.5px;line-height:38px;color:#f3f4f6;font-weight:700;letter-spacing:0.25px;left:40.0px;">Set Incident Notes HTML</h3>
<p>
<span style="top:121.3px;font-size:25px;line-height:32px;color:#a9adb8;letter-spacing:0.58px;left:40.0px;">Adds a note in HTML format to notes of the current</span>
<span style="top:153.3px;font-size:25px;line-height:32px;color:#a9adb8;letter-spacing:0.77px;left:40.0px;">incident</span>
</p>
</section>
<section class="card" style="left:764px;top:1554px">
<h3 style="top:42.8px;font-size:29.5px;line-height:38px;color:#f3f4f6;font-weight:700;letter-spacing:-0.10px;left:40.0px;">Test Search Conditions for Creating Inci...</h3>
<p>
<span style="top:121.3px;font-size:25px;line-height:32px;color:#a9adb8;letter-spacing:0.21px;left:40.0px;">Search incidents based on the given search criteria</span>
<span style="top:153.3px;font-size:25px;line-height:32px;color:#a9adb8;letter-spacing:0.39px;left:40.0px;">and return the results in ascending order of incide...</span>
</p>
</section>
<section class="card" style="left:1480px;top:1554px">
<h3 style="top:42.8px;font-size:29.5px;line-height:38px;color:#f3f4f6;font-weight:700;letter-spacing:0.06px;left:40.0px;">Update Identical Event</h3>
<p>
<span style="top:121.3px;font-size:25px;line-height:32px;color:#a9adb8;letter-spacing:0.39px;left:40.0px;">Use in an event playbook with the "On Event</span>
<span style="top:153.3px;font-size:25px;line-height:32px;color:#a9adb8;letter-spacing:0.48px;left:40.0px;">Ingestion" trigger. If there is an original event of th...</span>
</p>
</section>
<section class="card" style="left:2196px;top:1554px">
<h3 style="top:42.8px;font-size:29.5px;line-height:38px;color:#f3f4f6;font-weight:700;letter-spacing:-0.17px;left:40.0px;">Get Incidents</h3>
<p>
<span style="top:121.3px;font-size:25px;line-height:32px;color:#a9adb8;letter-spacing:0.41px;left:40.0px;">Gets a list of filtered incidents with specified fields</span>
</p>
<div style="top:212.0px;font-size:27.5px;line-height:36px;color:#a9adb8;font-weight:700;letter-spacing:-1.50px;left:40.0px;">{···}</div>
<div class="badge" style="left:464px;top:204px"></div>
<div style="top:217.3px;font-size:26px;line-height:34px;color:#eef0f5;letter-spacing:-0.56px;left:512.9px;">Python</div>
</section>
<div style="left:32px;top:1918px;width:2864px;height:2px;background:#4a4d58"></div>
<nav>
<svg style="left:54px;top:1953px" width="20" height="30" viewBox="0 0 20 30"><path d="M15.500 6 5 15 15.500 24" fill="none" stroke="#fff" stroke-width="2.200"/></svg>
<div style="left:112px;top:1936px;width:64px;height:64px;border-radius:50%;background:#3c3f4b"></div>
<a style="top:1951.2px;font-size:21.5px;line-height:28px;color:#eef0f5;left:138.0px;">1</a>
<a style="top:1951.2px;font-size:21.5px;line-height:28px;color:#eef0f5;left:218.0px;">2</a>
<a style="top:1951.2px;font-size:21.5px;line-height:28px;color:#eef0f5;left:298.0px;">3</a>
<a style="top:1951.2px;font-size:21.5px;line-height:28px;color:#eef0f5;left:378.0px;">4</a>
<a style="top:1951.2px;font-size:21.5px;line-height:28px;color:#eef0f5;left:458.0px;">5</a>
<svg style="left:529px;top:1964px" width="30" height="8" viewBox="0 0 30 8"><circle cx="4" cy="4" r="2.500" fill="#fff"/><circle cx="15" cy="4" r="2.500" fill="#fff"/><circle cx="26" cy="4" r="2.500" fill="#fff"/></svg>
<a style="top:1951.2px;font-size:21.5px;line-height:28px;color:#eef0f5;left:612.5px;">16</a>
<svg style="left:695px;top:1953px" width="20" height="30" viewBox="0 0 20 30"><path d="M4.500 6 15 15 4.500 24" fill="none" stroke="#fff" stroke-width="2.200"/></svg>
</nav>
<div style="top:1947.9px;font-size:29px;line-height:38px;color:#e6e8ed;letter-spacing:0.42px;left:2631.9px;">1 - 50 of 768 items</div>
</main>
<div class="foot"></div>
<script>(function(){var w=window.innerWidth||0;if(w>0&&Math.abs(w-3840)>2){document.documentElement.style.zoom=(w/3840);}})();</script>
</body></html>
